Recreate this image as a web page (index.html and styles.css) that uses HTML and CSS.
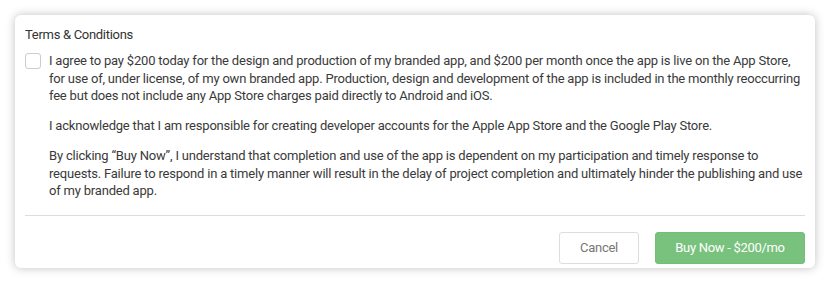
FILE: index.html
```html
<!DOCTYPE html>
<html lang="en">
<head>
  <meta charset="UTF-8">
  <title>Terms & Conditions</title>
  <link rel="stylesheet" href="styles.css">
</head>
<body>

  <div class="panel">
    <h2 class="title">Terms &amp; Conditions</h2>

    <div class="terms">
      <span class="check"></span>
      <div class="text">
        <p>I agree to pay $200 today for the design and production of my branded app, and $200 per month once the app is live on the App Store, for use of, under license, of my own branded app. Production, design and development of the app is included in the monthly reoccurring fee but does not include any App Store charges paid directly to Android and iOS.</p>
        <p>I acknowledge that I am responsible for creating developer accounts for the Apple App Store and the Google Play Store.</p>
        <p>By clicking “Buy Now”, I understand that completion and use of the app is dependent on my participation and timely response to requests. Failure to respond in a timely manner will result in the delay of project completion and ultimately hinder the publishing and use of my branded app.</p>
      </div>
    </div>

    <div class="actions">
      <button class="btn btn-cancel">Cancel</button>
      <button class="btn btn-buy">Buy Now - $200/mo</button>
    </div>
  </div>

</body>
</html>
```

FILE: styles.css
```css
body {
  margin: 0;
  padding: 15px;
  background-color: #fff;
  font-family: Roboto, Lato, Arial, sans-serif;
  letter-spacing: -0.3px;
  color: #3a3a3a;
}
.panel {
  background-color: #fff;
  border-radius: 6px;
  box-shadow: 0 0 10px rgba(0,0,0,0.25);
  padding: 12px 10px 6px 10px;
  height: 235px;
}
.title {
  margin: 0 0 10px 0;
  font-size: 13px;
  font-weight: normal;
  color: #333;
}
.terms {
  display: flex;
  gap: 8px;
  padding-bottom: 15px;
  border-bottom: 1px solid #ddd;
}
.check {
  flex: none;
  width: 14px;
  height: 14px;
  margin-top: 1px;
  border: 1px solid #ccc;
  border-radius: 3px;
}
.text p {
  margin: 0 0 12.5px 0;
  font-size: 13px;
  line-height: 17.5px;
  letter-spacing: -0.2px;
}
.text p:last-child {
  margin-bottom: 0;
}
.actions {
  display: flex;
  justify-content: flex-end;
  gap: 16px;
  padding-top: 16px;
}
.btn {
  height: 32px;
  font-family: inherit;
  font-size: 13px;
  letter-spacing: -0.3px;
  border-radius: 3px;
  cursor: pointer;
}
.btn-cancel {
  width: 80px;
  background-color: #fff;
  border: 1px solid #ddd;
  color: #777;
}
.btn-buy {
  width: 150px;
  background-color: #78c27e;
  border: 1px solid #72bd78;
  color: #fff;
}
```
